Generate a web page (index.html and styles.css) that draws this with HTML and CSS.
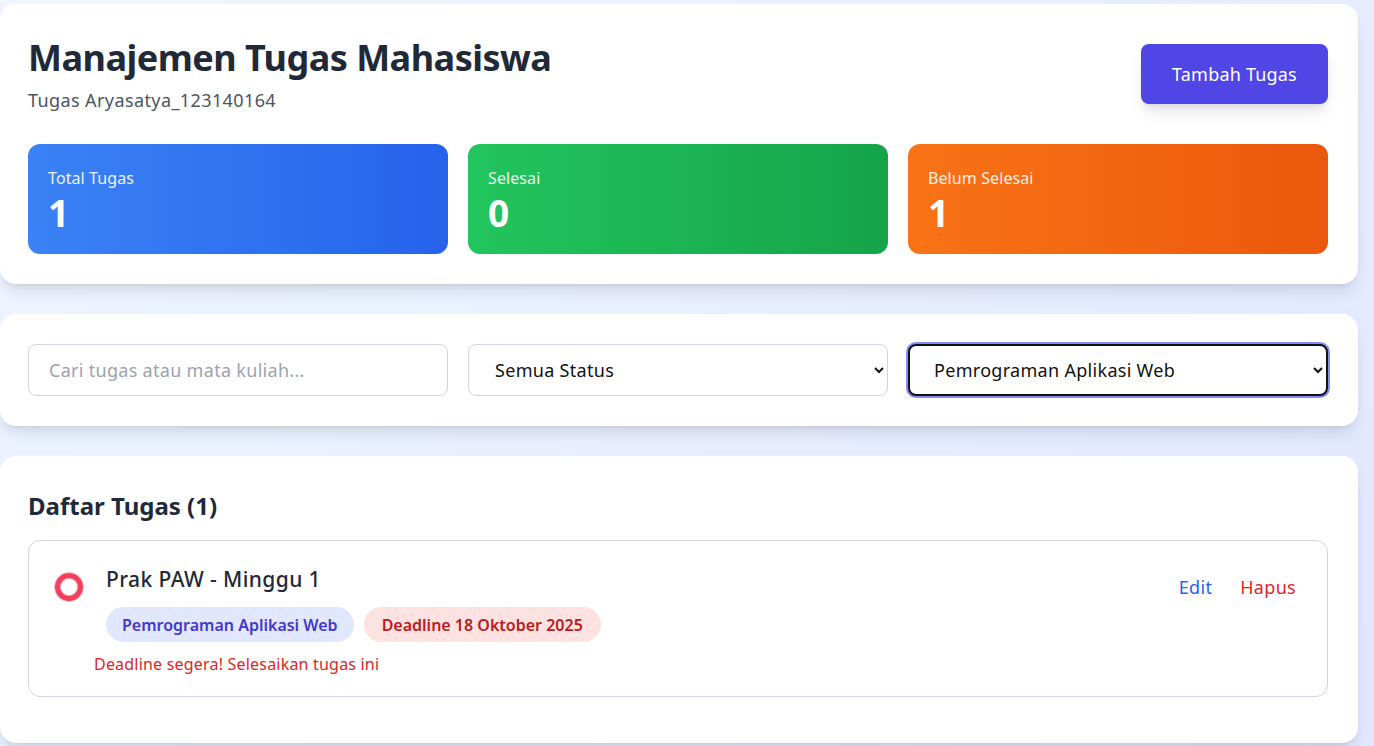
FILE: index.html
```html
<!DOCTYPE html>
<html lang="id">
<head>
<meta charset="utf-8">
<title>Manajemen Tugas Mahasiswa</title>
<link rel="stylesheet" href="styles.css">
</head>
<body>
<main class="page">
  <section class="card header-card">
    <div class="header-top">
      <div class="titles">
        <h1 class="title">Manajemen Tugas Mahasiswa</h1>
        <p class="subtitle">Tugas Aryasatya_123140164</p>
      </div>
      <button class="btn-add" type="button">Tambah Tugas</button>
    </div>
    <div class="stats">
      <div class="stat stat-blue"><div class="stat-label">Total Tugas</div><div class="stat-value">1</div></div>
      <div class="stat stat-green"><div class="stat-label">Selesai</div><div class="stat-value">0</div></div>
      <div class="stat stat-orange"><div class="stat-label">Belum Selesai</div><div class="stat-value">1</div></div>
    </div>
  </section>

  <section class="card filter-card">
    <input class="field" type="text" placeholder="Cari tugas atau mata kuliah...">
    <select class="field select">
      <option>Semua Status</option>
    </select>
    <select class="field select focused">
      <option>Pemrograman Aplikasi Web</option>
    </select>
  </section>

  <section class="card list-card">
    <h2 class="list-title">Daftar Tugas (1)</h2>
    <div class="task">
      <div class="task-main">
        <span class="check"></span>
        <div class="task-body">
          <div class="task-name">Prak PAW - Minggu 1</div>
          <div class="tags">
            <span class="tag tag-course">Pemrograman Aplikasi Web</span>
            <span class="tag tag-deadline">Deadline 18 Oktober 2025</span>
          </div>
        </div>
        <div class="actions">
          <a class="act act-edit">Edit</a>
          <a class="act act-del">Hapus</a>
        </div>
      </div>
      <p class="warn">Deadline segera! Selesaikan tugas ini</p>
    </div>
  </section>
</main>
</body>
</html>
```

FILE: styles.css
```css
* { box-sizing: border-box; }
html, body { margin: 0; }
body {
  min-height: 746px;
  background: linear-gradient(135deg, #eff6ff 0%, #e0e7ff 100%);
  font-family: "Noto Sans", "Open Sans", sans-serif;
  color: #1f2937;
  overflow: hidden;
}
.page {
  width: 1358px;
  padding-top: 4px;
  display: flex;
  flex-direction: column;
  gap: 30px;
}
.card {
  background: #fff;
  border-radius: 16px;
  box-shadow: 0 10px 15px -3px rgba(0,0,0,0.1), 0 4px 6px -4px rgba(0,0,0,0.1);
  padding: 30px 30px 30px 28px;
}
.header-card { padding-top: 34px; }
.header-top {
  display: flex;
  justify-content: space-between;
  align-items: flex-start;
}
.title {
  margin: 0;
  font-size: 36px;
  line-height: 40px;
  font-weight: 700;
  letter-spacing: -0.5px;
  color: #1f2937;
}
.subtitle {
  margin: 9px 0 0;
  font-size: 18px;
  line-height: 26px;
  letter-spacing: 0.4px;
  color: #4b5563;
}
.btn-add {
  margin-top: 6px;
  width: 187px;
  height: 60px;
  border: 0;
  border-radius: 8px;
  background: #4f46e5;
  color: #fff;
  font-family: inherit;
  font-size: 18px;
  letter-spacing: 0.2px;
  box-shadow: 0 10px 15px -3px rgba(0,0,0,0.12), 0 4px 6px -4px rgba(0,0,0,0.1);
}
.stats {
  margin-top: 31px;
  display: grid;
  grid-template-columns: repeat(3, 1fr);
  gap: 20px;
}
.stat {
  height: 110px;
  border-radius: 12px;
  padding: 22px 20px;
  color: #fff;
}
.stat-blue { background: linear-gradient(to right, #3b82f6, #2563eb); }
.stat-green { background: linear-gradient(to right, #22c55e, #16a34a); }
.stat-orange { background: linear-gradient(to right, #f97316, #ea580c); }
.stat-label {
  font-size: 16px;
  line-height: 24px;
  letter-spacing: 0.1px;
  opacity: 0.9;
}
.stat-value {
  margin-top: 3px;
  font-size: 37px;
  line-height: 40px;
  font-weight: 700;
}
.filter-card {
  display: grid;
  grid-template-columns: repeat(3, 1fr);
  gap: 20px;
}
.field {
  height: 52px;
  border: 1px solid #d1d5db;
  border-radius: 8px;
  background: #fff;
  font-family: inherit;
  font-size: 18px;
  letter-spacing: 0.3px;
  color: #111;
  padding: 0 20px;
  outline: none;
}
.field::placeholder { color: #9ca3af; }
.select { padding-left: 22px; }
.focused {
  border: 2px solid #111;
  padding-left: 20px;
  box-shadow: 0 0 0 2px #818cf8;
}
.list-card { padding-bottom: 46px; }
.list-title {
  margin: 4px 0 18px;
  font-size: 24px;
  line-height: 32px;
  font-weight: 700;
  color: #1f2937;
}
.task {
  border: 1px solid #d1d5db;
  border-radius: 12px;
  padding: 24px 30px 20px 26px;
}
.task-main {
  display: flex;
  align-items: flex-start;
}
.check {
  width: 28px;
  height: 28px;
  margin-top: 8px;
  border: 5px solid #f43f5e;
  border-radius: 50%;
  flex: none;
  box-shadow: inset 0 0 0 1px rgba(190,18,60,0.35), 0 0 0 1px rgba(190,18,60,0.25);
}
.task-body {
  margin-left: 23px;
  flex: 1;
}
.task-name {
  font-size: 21px;
  line-height: 28px;
  font-weight: 500;
  letter-spacing: 0.4px;
  color: #1f2937;
}
.tags {
  margin-top: 14px;
  display: flex;
  gap: 10px;
}
.tag {
  height: 35px;
  padding: 0 16px;
  border-radius: 18px;
  font-size: 16px;
  font-weight: 600;
  display: inline-flex;
  align-items: center;
}
.tag-course { background: #e0e7ff; color: #4338ca; }
.tag-deadline { background: #fee2e2; color: #b91c1c; padding: 0 18px; }
.actions {
  display: flex;
  gap: 28px;
  margin-top: 10px;
  margin-right: 1px;
  font-size: 18px;
  letter-spacing: 0.3px;
}
.act-edit { color: #2563eb; }
.act-del { color: #dc2626; }
.warn {
  margin: 10px 0 0 39px;
  font-size: 16px;
  line-height: 24px;
  letter-spacing: 0.2px;
  color: #dc2626;
}
```
